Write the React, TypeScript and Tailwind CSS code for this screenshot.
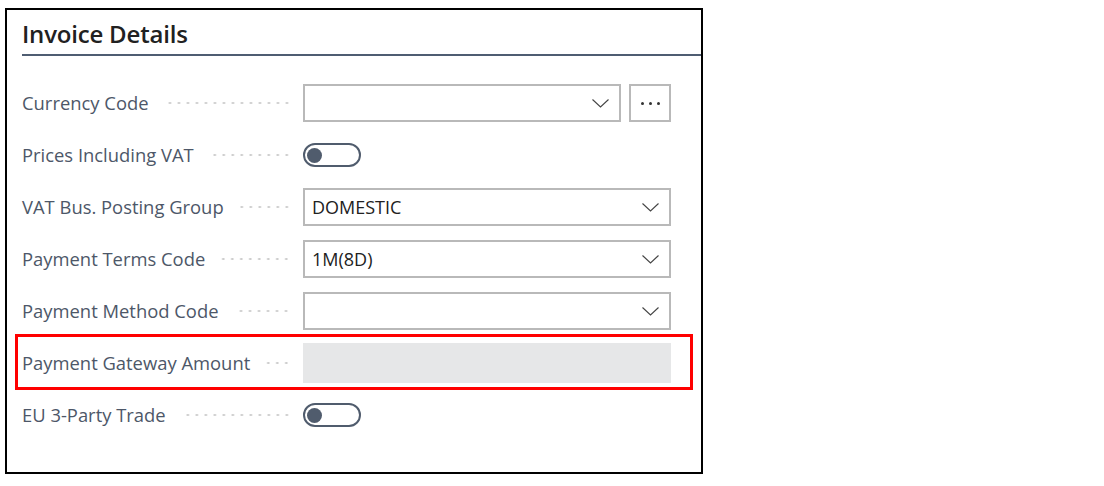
import { ReactNode } from "react";

//Types

type FieldProps = {
  label: string;
  children: ReactNode;
  highlight?: boolean;
};

//Pieces

const Chevron = () => (
  <svg width="17" height="9" viewBox="0 0 17 9" className="shrink-0">
    <polyline points="0.5,0.5 8.5,8 16.5,0.5" fill="none" stroke="#444" strokeWidth="1.1" />
  </svg>
);

const Select = ({ value, className = "" }: { value?: string; className?: string }) => (
  <div
    className={`h-[38px] border-2 border-[#b9b9b9] flex items-center justify-between pl-[7px] pr-[10px] text-[18px] text-[#212121] ${className}`}
  >
    <span>{value}</span>
    <Chevron />
  </div>
);

const Toggle = () => (
  <div className="w-[58px] h-[24px] rounded-full border-2 border-[#505c6d] flex items-center pl-[2px]">
    <div className="w-[15px] h-[15px] rounded-full bg-[#505c6d]" />
  </div>
);

const Field = ({ label, children, highlight }: FieldProps) => (
  <div className="relative h-[52px] flex items-center">
    {highlight && (
      <div className="absolute left-[-7px] right-[-22px] top-[-3px] bottom-[-1px] border-[3px] border-[#ff0000] pointer-events-none" />
    )}
    <div className="w-[281px] shrink-0 flex items-center pr-[12px]">
      <span className="text-[18.4px] text-[#4d5768] whitespace-nowrap">{label}</span>
      <div className="flex-1 ml-[16px] h-[4px] bg-[radial-gradient(circle,#c9c9c9_1px,transparent_1.3px)] bg-[length:9px_4px] bg-repeat-x bg-right" />
    </div>
    <div className="flex-1 flex items-center">{children}</div>
  </div>
);

//Component

const App = () => {
  return (
    <div
      className="w-full h-[486px] bg-white pt-[8px] pl-[5px]"
      style={{ fontFamily: '"Open Sans", "Noto Sans", sans-serif' }}
    >
      <div className="w-[698px] h-[466px] border-2 border-black">
        {/* Header */}
        <div className="ml-[15px] h-[46px] border-b-2 border-[#4f5d72] flex items-end pb-[8px]">
          <h1 className="text-[24px] font-semibold text-[#212121] leading-none tracking-[-0.2px]">
            Invoice Details
          </h1>
        </div>

        {/* Fields */}
        <div className="pt-[21px] pl-[15px] w-[664px]">
          <Field label="Currency Code">
            <Select className="w-[318px]" />
            <div className="ml-[8px] w-[42px] h-[38px] border-2 border-[#b9b9b9] flex items-center justify-center gap-[5px]">
              <span className="w-[3px] h-[3px] rounded-full bg-[#333]" />
              <span className="w-[3px] h-[3px] rounded-full bg-[#333]" />
              <span className="w-[3px] h-[3px] rounded-full bg-[#333]" />
            </div>
          </Field>
          <Field label="Prices Including VAT">
            <Toggle />
          </Field>
          <Field label="VAT Bus. Posting Group">
            <Select value="DOMESTIC" className="w-full" />
          </Field>
          <Field label="Payment Terms Code">
            <Select value="1M(8D)" className="w-full" />
          </Field>
          <Field label="Payment Method Code">
            <Select className="w-full" />
          </Field>
          <Field label="Payment Gateway Amount" highlight>
            <div className="w-full h-[40px] bg-[#e6e7e8]" />
          </Field>
          <Field label="EU 3-Party Trade">
            <Toggle />
          </Field>
        </div>
      </div>
    </div>
  );
};

export default App;
